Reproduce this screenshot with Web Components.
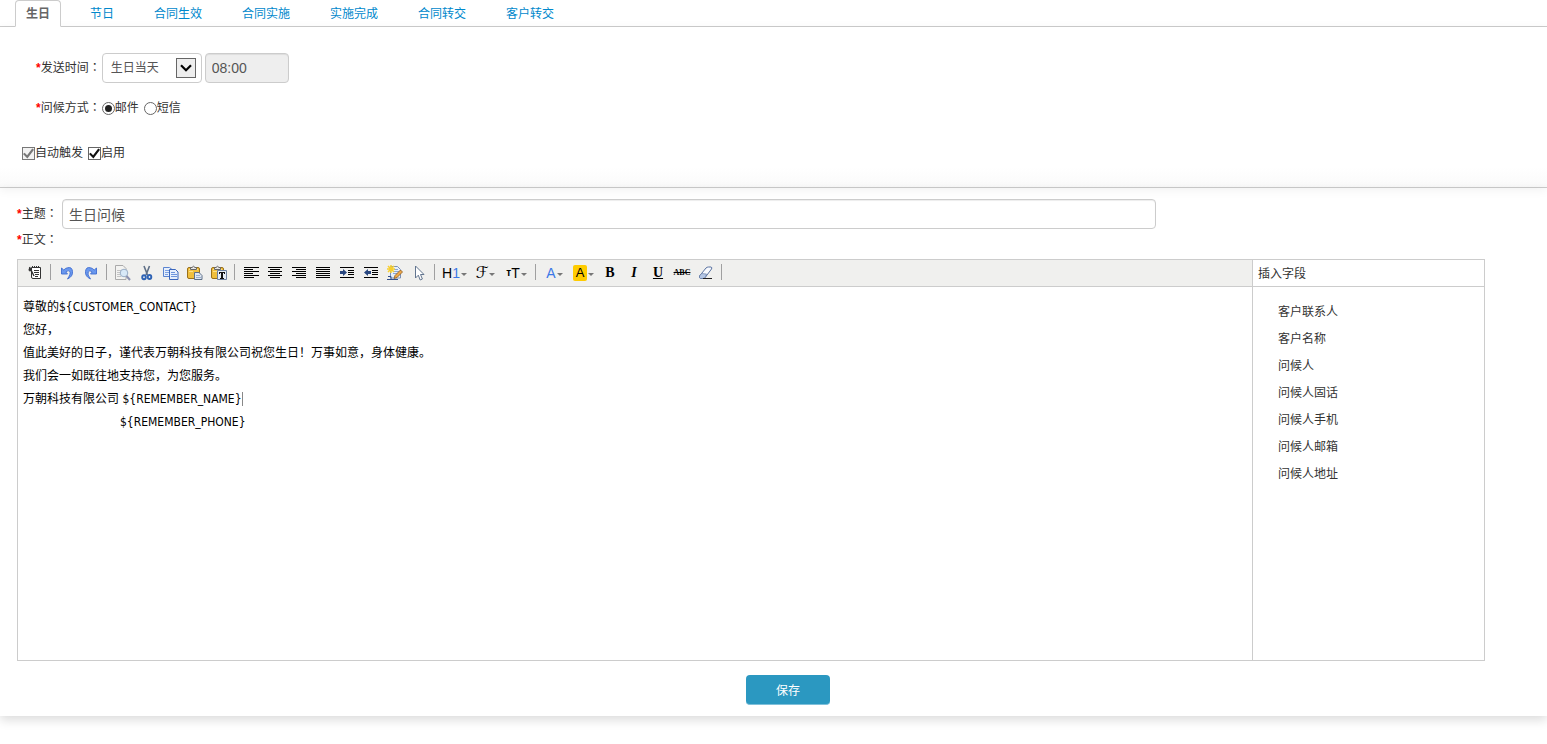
<!DOCTYPE html>
<html lang="zh-CN">
<head>
<meta charset="utf-8">
<title>问候设置</title>
<style>
    body {
        margin: 0;
        background: #fff;
        color: #333;
        font: 12px/20px "Liberation Sans", "Noto Sans CJK SC", sans-serif;
    }
</style>
</head>
<body>
<greeting-page></greeting-page>

<script>
/* Tabs */
class TabItem extends HTMLElement {
    constructor() {
        super()
        this.attachShadow({ mode: 'open' })
        this.shadowRoot.innerHTML = `
        <style>
        :host {
            display: block;
            margin-bottom: -1px;
        }
        a {
            display: block;
            box-sizing: border-box;
            height: 27px;
            padding: 3px 10px;
            border: 1px solid transparent;
            border-radius: 4px 4px 0 0;
            color: #08c;
            text-decoration: none;
        }
        :host([active]) a {
            color: #666;
            font-weight: bold;
            background: #fff;
            border-color: #ccc;
            border-bottom-color: #fff;
        }
        </style>
        <a href="#"><slot></slot></a>
        `
    }
}
customElements.define('tab-item', TabItem)

class TabBar extends HTMLElement {
    constructor() {
        super()
        this.attachShadow({ mode: 'open' })
        this.shadowRoot.innerHTML = `
        <style>
        :host {
            display: flex;
            gap: 18px;
            padding-left: 15px;
            border-bottom: 1px solid #ccc;
        }
        </style>
        <slot></slot>
        `
    }
}
customElements.define('tab-bar', TabBar)

/* Shared control styles */
const controls = `
    * { box-sizing: border-box; }
    input, select, button { font-family: inherit; margin: 0; }
    .req { color: #f00; font-weight: bold; }
    .colon { font-family: "Noto Sans CJK TC", sans-serif; line-height: 1; }
    .text {
        height: 30px;
        padding: 0 6px;
        border: 1px solid #ccc;
        border-radius: 4px;
        background: #fff;
        box-shadow: inset 0 1px 1px rgba(0,0,0,0.075);
        color: #555;
        font-size: 14px;
    }
`

/* Send settings */
class SendSettings extends HTMLElement {
    constructor() {
        super()
        this.attachShadow({ mode: 'open' })
        this.shadowRoot.innerHTML = `
        <style>
        ${controls}
        :host {
            display: flex;
            flex-direction: column;
            padding: 26px 22px 24px;
            border-bottom: 1px solid #ccc;
            background: linear-gradient(to top, #fafafa, #fff 20px);
            box-shadow: 0 2px 10px rgba(0,0,0,0.06);
        }
        .row {
            display: flex;
            align-items: center;
            padding-left: 14px;
            margin-bottom: 15px;
        }
        .row.checks {
            padding-left: 0;
            margin: 10px 0 0;
        }
        .name { margin-right: 1px; }
        .select {
            position: relative;
            margin-right: 3px;
        }
        select {
            appearance: none;
            display: block;
            width: 100px;
            height: 30px;
            padding: 0 8px;
            border: 1px solid #ccc;
            border-radius: 4px;
            background: #fff;
            color: #555;
            font-size: 12px;
        }
        .select svg {
            position: absolute;
            right: 6px;
            top: 5px;
            pointer-events: none;
        }
        .time {
            width: 84px;
            background: #eee;
        }
        .opt {
            display: flex;
            align-items: center;
            margin-right: 5px;
        }
        .opt input {
            appearance: none;
            display: grid;
            place-items: center;
            width: 13px;
            height: 13px;
            margin-top: 1px;
            border: 1px solid #666;
            background: #fff;
        }
        .opt input[type=radio] { border-radius: 50%; }
        .opt input[type=radio]:checked::before {
            content: '';
            width: 7px;
            height: 7px;
            border-radius: 50%;
            background: #222;
        }
        .opt input[type=checkbox]:checked::before {
            content: '';
            width: 11px;
            height: 11px;
            background: #111;
            clip-path: polygon(0 55%, 15% 43%, 37% 66%, 84% 5%, 100% 16%, 40% 95%);
        }
        .opt input:disabled { border-color: #777; background: #f2f2f2; }
        .opt input[type=checkbox]:disabled::before { background: #777; }
        </style>
        <div class="row">
            <label class="name" for="day"><span class="req">*</span>发送时间<span class="colon" lang="zh-TW">：</span></label>
            <div class="select">
                <select id="day"><option>生日当天</option></select>
                <svg width="20" height="20" viewBox="0 0 20 20">
                    <rect x="0.5" y="0.5" width="19" height="19" fill="#eee" stroke="#666"/>
                    <path d="M5 7.3L10 12.3L15 7.3" fill="none" stroke="#000" stroke-width="2.2"/>
                </svg>
            </div>
            <input class="text time" type="text" value="08:00" aria-label="时间" disabled>
        </div>
        <div class="row">
            <span class="name"><span class="req">*</span>问候方式<span class="colon" lang="zh-TW">：</span></span>
            <label class="opt"><input type="radio" name="way" checked>邮件</label>
            <label class="opt"><input type="radio" name="way">短信</label>
        </div>
        <div class="row checks">
            <label class="opt"><input type="checkbox" checked disabled>自动触发</label>
            <label class="opt"><input type="checkbox" checked>启用</label>
        </div>
        `
    }
}
customElements.define('send-settings', SendSettings)

/* Toolbar icons, 16 x 16 */
const lines = (rows) => `<g shape-rendering="crispEdges">${rows.map(([x, w], i) => `<rect x="${x}" y="${2 + i * 2}" width="${w}" height="1"/>`).join('')}</g>`
const indentLines = '<path d="M1 2h14v1H1zM9 5h6v1H9zM9 7h6v1H9zM9 9h6v1H9zM1 12h14v1H1z" shape-rendering="crispEdges"/>'
const board = `
    <rect x="0.500" y="2.500" width="12" height="11" rx="1.500" fill="#f0bf3c" stroke="#9a7019"/>
    <path d="M2 4.500h9M2 6.500h4" stroke="#fbe08a"/>
    <path d="M3.500 4.500V2.500h1.500q1.500-2.500 3 0h1.500v2z" fill="#e4e4e4" stroke="#666"/>`
const icons = {
    source: `
        <path d="M4.500 2.500h9v11H6q-1.500 0-1.500-1.500z" fill="#fff" stroke="#333"/>
        <path d="M5 1.500h1M7 1.500h1M9 1.500h1M11 1.500h1M7 5.500h5M7 7.500h5M8 9.500h4M8 11.500h3" stroke="#333"/>
        <path d="M2.500 2l4.500 9M2 5.500h3M3 2.500l-1 3" fill="none" stroke="#333" stroke-width="1.400"/>`,
    undo: '<path d="M2.500 3v6h6L6.800 7Q9.500 4.500 10.800 6.500T8.500 14Q14 11.500 13.500 6.500T8.500 2.800Q6.500 3 4.800 5z" fill="#6a98ee" stroke="#3f6dd0" stroke-width="0.900"/>',
    redo: '<path d="M13.500 3v6h-6L9.200 7Q6.500 4.500 5.200 7T7.500 14Q2 11.500 2.500 6.500T7.500 2.800Q9.500 3 11.200 5z" fill="#6a98ee" stroke="#3f6dd0" stroke-width="0.900"/>',
    preview: `
        <path d="M0.500 0.500h7.500l3 3v11H0.500z" fill="#f3f3f1" stroke="#aaa"/>
        <path d="M2 5.500h5M2 7.500h4M2 9.500h3M2 11.500h4" stroke="#c4c4c4"/>
        <circle cx="9" cy="8" r="3.800" fill="#d8e9f8" stroke="#9aaec6"/>
        <path d="M11.500 11l3.500 4" stroke="#8a91b0" stroke-width="2"/>`,
    cut: `
        <path d="M5 1l3.500 9M10.500 1L7 10" stroke="#5f7087" stroke-width="1.600"/>
        <ellipse cx="5" cy="12.300" rx="1.800" ry="2" fill="none" stroke="#2d62b4" stroke-width="1.900"/>
        <ellipse cx="10.500" cy="12" rx="1.800" ry="2" fill="none" stroke="#2d62b4" stroke-width="1.900"/>`,
    copy: `
        <path d="M0.500 2.500h6l2.500 2v7H0.500z" fill="#e6effc" stroke="#5a84d0"/>
        <path d="M2 5.500h5M2 7.500h5M2 9.500h3" stroke="#7da2e2"/>
        <path d="M6.500 4.500h6l2.500 2.500v7.500H6.500z" fill="#e6effc" stroke="#3a66bc"/>
        <path d="M8 7.500h4M8 9.500h6M8 11.500h6" stroke="#6e96dc"/>`,
    paste: board + '<path d="M7.500 7.500h4.500l3 3v4H7.500z" fill="#dfe7f1" stroke="#5d6f88"/><path d="M9 10.500h4M9 12.500h5" stroke="#9aaecb"/>',
    plain: board + '<path d="M6.500 5.500h9v9h-9z" fill="#e6eef8" stroke="#6c80a0"/><path d="M8 7h6v2h-1V8h-1v5h1v1H9v-1h1V8H9v1H8z" fill="#111"/>',
    left: lines([[1, 15], [1, 9], [1, 15], [1, 9], [1, 15], [1, 10]]),
    center: lines([[1, 14], [3, 10], [1, 14], [3, 10], [1, 14], [3, 10]]),
    right: lines([[1, 14], [5, 10], [1, 14], [5, 10], [1, 14], [5, 10]]),
    justify: lines([[1, 14], [1, 14], [1, 14], [1, 14], [1, 14], [1, 14]]),
    indent: indentLines + '<path d="M1 6h3V4l4 3.500L4 11V9H1z" fill="#29477f"/>',
    outdent: indentLines + '<path d="M8 6H5V4L1 7.500L5 11V9h3z" fill="#29477f"/>',
    format: `
        <path d="M3.500 1.500h7l3 3v8.500h-10z" fill="#e6effb" stroke="#7b91b8"/>
        <path d="M7 4.500h4M6 6.500h6M6 8.500h5" stroke="#8ba6d4"/>
        <path d="M4 0v8M0 4h8M1 1l6 6M7 1L1 7" stroke="#f8cf2e" stroke-width="1.500"/>
        <path d="M7 13.500l1-3L13.500 5l2 2L10 12.500z" fill="#f0a848" stroke="#8c5a20" stroke-width="0.800"/>
        <path d="M1 11.500h3v3H0M4 14.500h7" fill="none" stroke="#33508c"/>`,
    select: '<path d="M4.500 1v12l2.800-2.800 1.900 4.800 2.200-1L9.500 9.500H13z" fill="#fff" stroke="#62758f"/>',
    eraser: `
        <path d="M1.500 11L8 3q1-1 2.500-1h2.500q1.500 0.500 0.500 2L7.500 12q-1 1.500-2.500 1.500H2.500Q1 13 1.500 11z" fill="#f7f9fd" stroke="#5972a0"/>
        <path d="M1.500 11L3.500 8.500l5 0.500L7.500 12q-1 1.500-2.500 1.500H2.500Q1 13 1.500 11z" fill="#b4c6e4" stroke="#5972a0" stroke-width="0.600"/>
        <path d="M5 13.500h9" stroke="#222"/>`,
}

class ToolBtn extends HTMLElement {
    constructor() {
        super()
        this.attachShadow({ mode: 'open' })
        const icon = icons[this.getAttribute('icon')]
        this.shadowRoot.innerHTML = `
        <style>
        :host { display: block; }
        button {
            display: flex;
            align-items: center;
            justify-content: center;
            width: 24px;
            height: 26px;
            padding: 0;
            border: 0;
            background: none;
            color: #000;
            font: 14px/16px "Liberation Sans", sans-serif;
            cursor: pointer;
        }
        :host([drop]) button { width: 31px; }
        :host([color]) button { width: 29px; }
        :host([drop]) button::after, :host([color]) button::after {
            content: '';
            margin: 2px 0 0 1px;
            border: 3px solid transparent;
            border-top-color: #777;
            border-bottom: 0;
        }
        button:hover { background: #e9eff6; }
        </style>
        <button type="button" title="${this.title}">${icon ? `<svg width="16" height="16" viewBox="0 0 16 16">${icon}</svg>` : '<slot></slot>'}</button>
        `
    }
}
customElements.define('tool-btn', ToolBtn)

/* Editor */
class RichEditor extends HTMLElement {
    constructor() {
        super()
        this.attachShadow({ mode: 'open' })
        this.shadowRoot.innerHTML = `
        <style>
        :host {
            display: flex;
            flex-direction: column;
            flex: 1;
            min-width: 0;
        }
        .bar {
            display: flex;
            flex-wrap: wrap;
            padding-left: 5px;
            background: #f0f0ee;
            border-bottom: 1px solid #ccc;
        }
        hr {
            width: 1px;
            height: 16px;
            margin: 4px 4px 6px 3px;
            border: 0;
            background: #a0a0a0;
        }
        .blue { color: #3b78e7; }
        .script { font: 16px/16px "DejaVu Serif", "DejaVu Sans", serif; }
        .small { font-size: 10px; font-weight: bold; }
        .mark {
            padding: 0 3px;
            border-radius: 2px;
            background: #fc0;
            font-size: 13px;
        }
        .serif { font: bold 14px/16px "Liberation Serif", serif; }
        .italic { font-style: italic; }
        .abc { font-size: 8px; }
        .doc {
            flex: 1;
            min-height: 373px;
            box-sizing: border-box;
            padding: 9px 5px;
            outline: 0;
            color: #000;
            font: 12px/23px "DejaVu Sans Condensed", "Noto Sans CJK SC", sans-serif;
        }
        p { margin: 0; }
        .sign { padding-left: 97px; }
        .caret { border-right: 1px solid #888; }
        </style>
        <div class="bar" role="toolbar">
            <tool-btn icon="source" title="HTML代码"></tool-btn>
            <hr>
            <tool-btn icon="undo" title="后退"></tool-btn>
            <tool-btn icon="redo" title="前进"></tool-btn>
            <hr>
            <tool-btn icon="preview" title="预览"></tool-btn>
            <tool-btn icon="cut" title="剪切"></tool-btn>
            <tool-btn icon="copy" title="复制"></tool-btn>
            <tool-btn icon="paste" title="粘贴"></tool-btn>
            <tool-btn icon="plain" title="粘贴为无格式文本"></tool-btn>
            <hr>
            <tool-btn icon="left" title="左对齐"></tool-btn>
            <tool-btn icon="center" title="居中"></tool-btn>
            <tool-btn icon="right" title="右对齐"></tool-btn>
            <tool-btn icon="justify" title="两端对齐"></tool-btn>
            <tool-btn icon="indent" title="增加缩进"></tool-btn>
            <tool-btn icon="outdent" title="减少缩进"></tool-btn>
            <tool-btn icon="format" title="一键排版"></tool-btn>
            <tool-btn icon="select" title="全选"></tool-btn>
            <hr>
            <tool-btn drop title="段落">H<span class="blue">1</span></tool-btn>
            <tool-btn drop title="字体"><span class="script">ℱ</span></tool-btn>
            <tool-btn drop title="文字大小"><span class="small">т</span>T</tool-btn>
            <hr>
            <tool-btn color title="文字颜色"><span class="blue">A</span></tool-btn>
            <tool-btn color title="文字背景"><span class="mark">A</span></tool-btn>
            <tool-btn title="粗体"><span class="serif">B</span></tool-btn>
            <tool-btn title="斜体"><i class="serif italic">I</i></tool-btn>
            <tool-btn title="下划线"><u class="serif">U</u></tool-btn>
            <tool-btn title="删除线"><s class="serif abc">ABC</s></tool-btn>
            <tool-btn icon="eraser" title="删除格式"></tool-btn>
            <hr>
        </div>
        <div class="doc" contenteditable="true" spellcheck="false" role="textbox" aria-multiline="true" aria-label="正文">
            <p>尊敬的\${CUSTOMER_CONTACT}</p>
            <p>您好，</p>
            <p>值此美好的日子，谨代表万朝科技有限公司祝您生日！万事如意，身体健康。</p>
            <p>我们会一如既往地支持您，为您服务。</p>
            <p><span class="caret">万朝科技有限公司 \${REMEMBER_NAME}</span></p>
            <p class="sign">\${REMEMBER_PHONE}</p>
        </div>
        `
    }
}
customElements.define('rich-editor', RichEditor)

/* Field list beside the editor */
class FieldList extends HTMLElement {
    constructor() {
        super()
        this.attachShadow({ mode: 'open' })
        this.shadowRoot.innerHTML = `
        <style>
        :host {
            display: block;
            flex: 0 0 232px;
            box-sizing: content-box;
            border-left: 1px solid #ccc;
        }
        header {
            padding: 2px 0 0 5px;
            line-height: 24px;
            border-bottom: 1px solid #ccc;
        }
        ul {
            margin: 0;
            padding: 12px 0 0 25px;
            list-style: none;
            line-height: 27px;
        }
        </style>
        <header>${this.getAttribute('heading')}</header>
        <ul>${this.getAttribute('fields').split(',').map((f) => `<li>${f}</li>`).join('')}</ul>
        `
    }
}
customElements.define('field-list', FieldList)

/* Message form */
class MessageForm extends HTMLElement {
    constructor() {
        super()
        this.attachShadow({ mode: 'open' })
        this.shadowRoot.innerHTML = `
        <style>
        ${controls}
        :host {
            display: block;
            padding: 11px 62px 11px 17px;
            box-shadow: 0 4px 10px rgba(0,0,0,0.14);
        }
        .subject {
            display: flex;
            align-items: center;
        }
        .subject label { flex: 0 0 45px; white-space: nowrap; }
        .subject .text { flex: 0 0 74.5%; }
        .body {
            display: block;
            margin-bottom: 7px;
            line-height: 23px;
        }
        .panes {
            display: flex;
            border: 1px solid #ccc;
        }
        footer {
            display: flex;
            justify-content: center;
            padding: 14px 0 0 74px;
        }
        footer button {
            width: 84px;
            height: 30px;
            border: 0;
            border-bottom: 1px solid #7fc0da;
            border-radius: 4px;
            background: #2b98c1;
            color: #fff;
            font-size: 12px;
            cursor: pointer;
        }
        </style>
        <div class="subject">
            <label for="subject"><span class="req">*</span>主题<span class="colon" lang="zh-TW">：</span></label>
            <input class="text" id="subject" type="text" value="生日问候">
        </div>
        <span class="body"><span class="req">*</span>正文<span class="colon" lang="zh-TW">：</span></span>
        <div class="panes">
            <rich-editor></rich-editor>
            <field-list heading="插入字段" fields="客户联系人,客户名称,问候人,问候人固话,问候人手机,问候人邮箱,问候人地址"></field-list>
        </div>
        <footer><button type="submit">保存</button></footer>
        `
    }
}
customElements.define('message-form', MessageForm)

/* Page */
class GreetingPage extends HTMLElement {
    constructor() {
        super()
        this.attachShadow({ mode: 'open' })
        this.shadowRoot.innerHTML = `
        <style>
        :host {
            display: block;
            box-sizing: border-box;
            min-height: 100vh;
            padding-bottom: 20px;
        }
        </style>
        <tab-bar>
            <tab-item active>生日</tab-item>
            <tab-item>节日</tab-item>
            <tab-item>合同生效</tab-item>
            <tab-item>合同实施</tab-item>
            <tab-item>实施完成</tab-item>
            <tab-item>合同转交</tab-item>
            <tab-item>客户转交</tab-item>
        </tab-bar>
        <send-settings></send-settings>
        <message-form></message-form>
        `
    }
}
customElements.define('greeting-page', GreetingPage)
</script>
</body>
</html>
